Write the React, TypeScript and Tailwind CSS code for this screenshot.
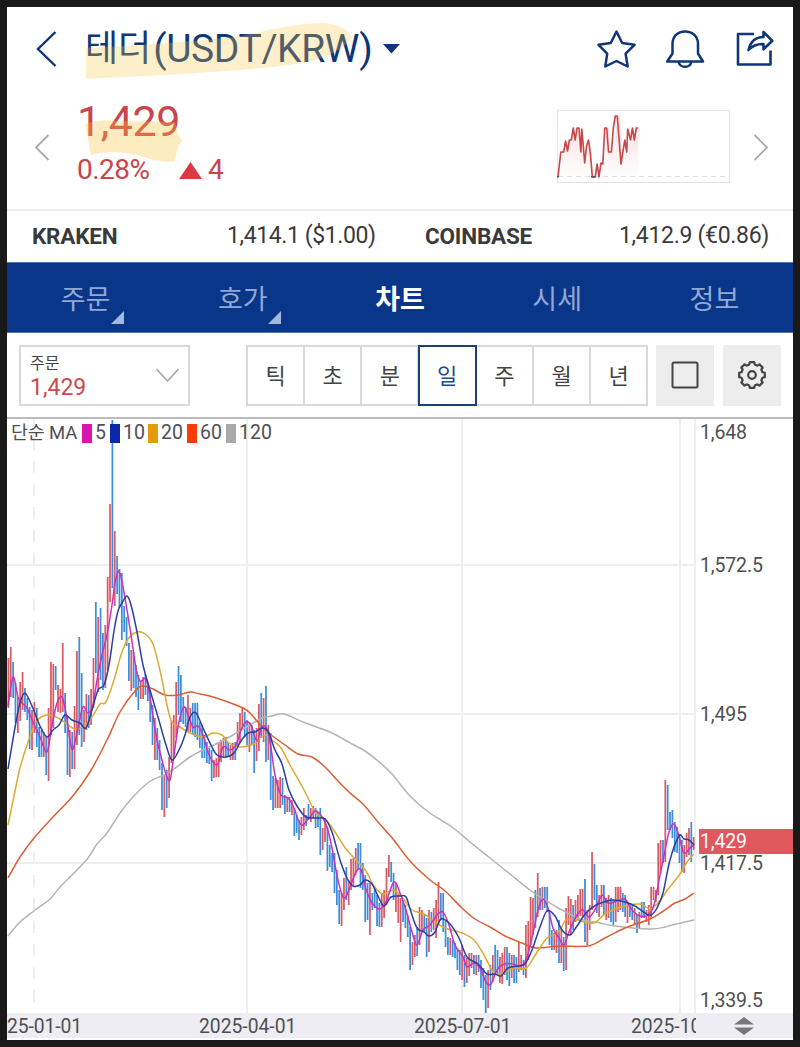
import { ReactNode } from "react";
import clsx from "clsx";

type Point = [number, number];

const CHART_LEFT = 7;
const CHART_TOP = 419;
const CANDLE_STEP = 2.363;

// one entry per day: direction, high, low
const candles =
  "u658-708 u647-697 d662-698 d683-723 u697-733 u682-721 u672-710 d688-712 d698-720 d707-749 u710-750 u702-733 d708-747 d727-757 d730-757 u732-757 d737-775 u708-781 u662-735 u664-728 " +
  "d666-690 u685-712 u689-713 u643-712 d693-733 d717-775 u730-777 d732-769 u706-769 u651-745 d637-735 d673-747 u710-742 u694-730 d695-728 u689-725 u658-708 d602-673 u617-692 d608-680 " +
  "d633-690 u625-688 u577-670 u504-602 d420-588 u531-606 d556-594 d569-608 d573-640 d606-632 d617-646 d643-681 u650-691 d652-688 d665-697 d675-710 u681-699 u677-699 d674-695 d683-701 " +
  "d690-722 d705-745 u718-760 d728-760 d740-770 d763-810 u775-817 d770-808 u757-798 u720-763 u715-757 u682-738 d666-715 d675-722 d697-724 d707-727 u695-732 u708-732 d703-735 d703-737 " +
  "d703-740 d722-748 d725-758 d735-758 d742-763 d748-764 d750-781 u760-778 u758-777 u743-777 u740-762 u738-757 d737-757 d742-757 u745-760 u743-760 d742-760 u722-747 u713-742 u707-730 " +
  "d712-737 d720-745 u722-752 d725-745 d730-773 u728-761 u704-751 d693-738 u698-742 d686-762 u725-760 d733-800 d776-810 u778-808 u780-808 u777-808 d778-805 d795-814 u797-812 d797-812 " +
  "u800-815 d808-836 d815-833 d820-840 u817-835 u808-830 d815-826 d804-820 u808-822 u806-818 d808-828 d812-827 d808-855 u828-850 u818-842 d827-871 d845-867 d853-872 d853-893 d870-905 " +
  "d890-924 u893-926 u878-910 d867-900 u880-905 u859-890 u858-885 u848-875 d843-870 d843-888 d863-890 d875-922 d883-920 u883-935 d893-910 d888-908 d895-926 d903-927 u893-927 u890-918 " +
  "u868-905 u855-877 d862-882 d873-900 u883-912 u893-923 u898-942 d900-922 d905-928 d915-937 d927-970 u942-965 u935-957 d927-956 u907-945 u910-930 d915-932 d918-957 u910-952 d912-932 " +
  "u908-930 u900-938 u882-925 d893-920 d893-932 d920-947 d937-955 u938-955 d940-957 d943-958 d948-970 d950-975 u945-980 d955-987 u958-983 u953-976 u953-968 d955-974 u955-975 d955-972 " +
  "d960-988 d968-1000 d975-1013 u970-1008 d965-990 u955-982 d945-975 d950-975 u957-983 u953-984 u947-975 d947-980 d953-986 u955-978 d955-983 d957-983 u942-972 u955-970 d960-975 u925-978 " +
  "u921-960 u897-945 u898-935 d890-928 u873-917 d888-910 u887-910 d887-908 d887-912 d912-945 d930-950 u933-950 u930-953 d920-963 u930-963 d937-971 u908-970 u896-925 u899-935 d905-930 " +
  "u900-922 u895-920 u889-916 u889-918 d879-942 u910-945 u905-930 u852-910 d864-900 d885-913 u895-917 u885-907 d885-915 u898-920 u895-918 d898-922 d900-925 u887-922 u887-912 u887-910 " +
  "d893-912 d895-917 u902-923 d903-917 d905-920 u908-925 d915-933 u912-928 d902-918 d902-918 u910-922 u905-925 u887-918 u887-900 u890-902 u843-895 u840-873 d840-863 u780-862 d785-830 " +
  "d812-830 d810-838 d822-852 d827-853 d835-863 d840-872 u845-873 u833-857 u828-855 d822-862 u837-850";

const averages = [
  {
    color: "#b4b4b4",
    points:
      "8,936 20,922 34,911 50,899 60,887 74,873 88,858 97,844 107,833 120,813 133,797 149,782 164,775 174,769 190,757 203,750 220,742 233,735 250,725 262,718 272,716 284,714 303,722 330,732 345,740 352,744 365,751 378,761 392,774 410,796 430,813 452,827 470,842 490,858 510,874 530,890 545,900 560,909 580,919 600,923 615,926 650,929 665,927 672,925 694,920",
  },
  {
    color: "#d95f35",
    points:
      "8,878 20,857 34,838 52,818 72,797 90,772 107,740 120,712 135,691 143,686 153,689 165,695 178,695 190,692 200,694 213,697 228,702 243,708 250,713 262,727 270,734 285,745 298,754 312,757 325,767 338,781 350,793 363,804 378,822 393,839 410,861 430,880 444,890 462,908 475,919 490,927 505,936 522,943 536,948 560,946 588,946 605,938 625,928 650,919 662,912 675,903 685,899 694,893",
  },
  {
    color: "#dcab32",
    points:
      "8,825 14,796 20,768 27,745 35,724 41,717 50,715 60,719 68,725 75,729 84,726 92,717 100,704 106,702 114,680 121,655 128,639 137,632 145,634 153,644 161,675 167,705 172,722 180,727 190,733 203,737 213,733 222,735 229,743 240,747 254,744 260,738 266,735 272,740 281,748 290,765 303,788 316,813 326,820 335,832 346,849 357,861 366,871 374,886 383,894 393,890 402,897 412,910 424,914 436,923 448,929 462,933 474,940 484,955 494,973 503,973 513,968 526,968 534,957 547,938 558,933 566,920 577,920 588,923 596,922 605,914 620,907 640,904 650,909 658,903 669,888 680,874 687,862 694,854",
  },
  {
    color: "#cb30c0",
    points:
      "8,706 13,677 18,697 22,703 27,708 33,722 40,737 47,752 52,725 57,703 62,697 66,713 70,740 73,749 78,728 83,707 88,713 93,705 97,680 102,655 107,635 112,605 115,583 119,571 123,587 127,610 131,635 136,668 140,681 146,679 150,697 156,735 162,760 166,774 170,780 174,755 179,722 184,707 188,715 193,727 198,726 203,735 208,752 213,762 218,764 223,747 230,750 236,745 241,730 246,722 251,725 257,741 262,727 267,729 271,748 275,775 281,795 288,798 294,808 299,822 303,825 309,818 316,811 322,817 327,827 332,848 338,880 344,898 350,887 356,872 361,870 366,889 372,903 380,909 386,902 394,882 400,893 406,910 412,932 417,945 423,930 430,925 437,915 443,912 449,925 455,945 463,957 467,967 474,963 480,968 486,982 491,984 497,970 504,964 513,964 520,966 526,960 532,938 538,910 543,899 548,908 553,928 559,938 564,945 569,932 577,915 583,910 589,917 596,908 602,895 608,903 617,901 625,899 632,910 640,916 648,915 654,905 660,875 664,856 669,832 674,824 679,836 684,853 690,848 694,845",
  },
  {
    color: "#2b3fa4",
    points:
      "8,769 12,745 16,722 20,703 25,693 32,706 40,726 47,737 53,730 59,725 65,715 72,720 80,723 86,728 92,710 98,690 104,685 109,665 114,631 118,611 122,603 127,596 131,605 137,632 143,665 150,690 158,717 166,745 172,760 179,750 185,735 190,717 196,713 203,728 211,745 217,755 226,757 234,753 241,741 248,733 255,732 262,728 268,731 275,750 282,764 289,790 297,806 306,817 316,818 325,819 332,832 340,860 347,878 353,886 360,885 365,880 372,884 378,896 384,906 391,897 400,896 406,897 411,912 417,928 424,932 429,936 435,932 441,919 450,924 459,938 467,957 478,964 487,974 495,974 501,976 508,968 518,966 525,964 532,950 540,927 547,911 555,916 562,930 570,935 577,926 586,913 596,905 604,902 613,900 625,902 635,906 645,913 651,915 657,908 663,893 670,860 679,836 684,839 689,840 694,845",
  },
];

const legend = [
  { label: "5", className: "bg-[#d916b0]", width: "w-[28px]" },
  { label: "10", className: "bg-[#0a28a8]", width: "w-[38px]" },
  { label: "20", className: "bg-[#e59a0c]", width: "w-[39px]" },
  { label: "60", className: "bg-[#fb3a06]", width: "w-[39px]" },
  { label: "120", className: "bg-[#a9a9a9]", width: "" },
];

const tabs = [
  { label: "주문", hasMenu: true },
  { label: "호가", hasMenu: true },
  { label: "차트", active: true },
  { label: "시세" },
  { label: "정보" },
];

const periods = ["틱", "초", "분", "일", "주", "월", "년"];

function smoothPath(source: string) {
  const points = source.split(" ").map((pair) => pair.split(",").map(Number) as Point);

  return points.reduce((path, point, i) => {
    if (i === 0) return `M${point[0]} ${point[1]}`;
    const before = points[i - 2] ?? points[i - 1];
    const from = points[i - 1];
    const after = points[i + 1] ?? point;
    const c1 = [from[0] + (point[0] - before[0]) / 6, from[1] + (point[1] - before[1]) / 6];
    const c2 = [point[0] - (after[0] - from[0]) / 6, point[1] - (after[1] - from[1]) / 6];
    return `${path}C${c1[0]} ${c1[1]} ${c2[0]} ${c2[1]} ${point[0]} ${point[1]}`;
  }, "");
}

function Header() {
  return (
    <header className="relative h-[83px] flex items-center justify-between pl-[29px] pr-[19px] text-[#0f3678]">
      <div className="flex items-center">
        <svg width="21" height="36" viewBox="0 0 21 36" fill="none" stroke="currentColor" strokeWidth="2.400">
          <path d="M19.500 1 2 18l17.500 17" />
        </svg>
        <h1 className="ml-[28px] w-[288px] flex items-center whitespace-nowrap text-[39px] leading-[46px] tracking-[-0.4px]">
          <span className="mr-[2px] text-[36px] tracking-[0px]">테더</span>
          <span>(USDT/KRW)</span>
        </h1>
        <svg className="ml-[10px]" width="17" height="10" viewBox="0 0 17 10" fill="currentColor">
          <path d="M0 0h17L8.500 9.500z" />
        </svg>
      </div>
      <div className="flex items-center gap-[29px]">
        <svg width="40" height="38" viewBox="0 1.500 40 38" fill="none" stroke="currentColor" strokeWidth="2.500" strokeLinejoin="round">
          <path d="m20.500 3 5.700 11.500 12.300 1.800-8.900 8.900 2.100 12.800-11.200-5.500L9.300 38l1.900-12.800-8.700-8.900 12.300-1.800z" />
        </svg>
        <svg width="40" height="38" viewBox="0 1.500 40 38" fill="none" stroke="currentColor" strokeWidth="2.500" strokeLinejoin="round">
          <path d="M7.500 25V15.500C7.500 8 12.500 3 20 3s13 5 13 12.500V25l5 8H2.200z" />
          <path d="M13.500 33.500c1 3.200 3.400 4.800 6.500 4.800s5.500-1.600 6.500-4.800" />
        </svg>
        <svg width="40" height="38" viewBox="0 1.500 40 38" fill="none" stroke="currentColor" strokeWidth="2.600" strokeLinejoin="round">
          <path d="M20 5.500H4V36H36.500V22" />
          <path d="M14.500 21.500C16.500 13 21.500 8.500 29.500 8.500V3.500l8.800 8.800-8.800 8.500v-5.300c-6-.2-11 1.500-15 6z" />
        </svg>
      </div>
      <svg
        className="absolute left-[76px] top-[14px] pointer-events-none"
        width="272"
        height="60"
        viewBox="0 0 272 60"
        fill="#f8c742"
        fillOpacity="0.28"
      >
        <path d="M3 27C60 24 120 20 158 15c25-5 50-12 80-13 14 0 27 6 31 14-6 10-20 19-47 26-65 9-145 12-219 16z" />
      </svg>
    </header>
  );
}

function Sparkline() {
  const line =
    "1,67 4,42 7,42 9,31 11,41 13,30 15,30 17,18 19,30 21,18 23,18 25,42 26,19 29,53 31,36 33,30 35,44 37,67 40,67 42,54 44,67 46,53 48,54 50,18 52,18 54,42 57,42 59,18 61,6 63,6 65,29 67,54 70,36 71,30 73,42 74,19 77,30 79,18 81,30 83,18 85,18";

  return (
    <svg width="173" height="73" viewBox="0 0 173 73" fill="none">
      <defs>
        <linearGradient id="spark" x1="0" y1="0" x2="0" y2="1">
          <stop offset="0" stopColor="#e8433f" stopOpacity="0.2" />
          <stop offset="1" stopColor="#e8433f" stopOpacity="0" />
        </linearGradient>
      </defs>
      <rect x="0.500" y="0.500" width="172" height="72" stroke="#e4e4e4" />
      <path d="M1 66.500H172" stroke="#dedede" strokeDasharray="5 4" />
      <polygon points={`${line} 81,67 1,67`.replace("85,18", "81,18")} fill="url(#spark)" />
      <polyline
        points={line}
        stroke="#c9474b"
        strokeWidth="1.700"
        strokeLinejoin="round"
        transform="scale(0.955 1)"
      />
      <path d="M34 66.800h4M0 66.800h2" stroke="#555" strokeWidth="1.500" />
    </svg>
  );
}

function PriceSummary() {
  return (
    <section className="relative h-[119px] flex justify-between pl-[27px] pr-[24px] text-[#c9444c]">
      <div className="flex">
        <svg className="mt-[44px]" width="16" height="27" viewBox="0 0 16 27" fill="none" stroke="#aaa" strokeWidth="1.800">
          <path d="M14.500 1 2 13.500l12.500 12.500" />
        </svg>
        <div className="ml-[27px]">
          <p className="mt-[7px] text-[43px] leading-[48px] tracking-[-0.400px]">1,429</p>
          <div className="mt-[9px] flex items-center text-[28px] leading-[32px] tracking-[-0.5px]">
            <span className="w-[102px]">0.28%</span>
            <svg width="23" height="17" viewBox="0 0 23 17" fill="#dc3940">
              <path d="M11.500 0 23 17H0z" />
            </svg>
            <span className="ml-[6px]">4</span>
          </div>
        </div>
      </div>
      <div className="flex">
        <div className="mt-[20px]">
          <Sparkline />
        </div>
        <svg className="ml-[23px] mt-[44px]" width="16" height="27" viewBox="0 0 16 27" fill="none" stroke="#aaa" strokeWidth="1.800">
          <path d="m1.500 1 12.500 12.500L1.500 26" />
        </svg>
      </div>
      <svg
        className="absolute left-[77px] top-[27px] pointer-events-none"
        width="100"
        height="46"
        viewBox="0 0 100 46"
        fill="#f8c03c"
        fillOpacity="0.32"
      >
        <path d="M1 7c10-4 20-4 32-3l58 1 3 13 4 6-4 5-3 15c-5 2-14 0-22-1-20-8-45-10-62-5z" />
      </svg>
    </section>
  );
}

function Exchanges() {
  return (
    <section className="h-[53px] shrink-0 flex items-center border-t-2 border-[#eeeeee] pl-[25px] pr-[24px] text-[23px] leading-[30px] text-[#3a3a3a] tracking-[-0.400px]">
      <b className="w-[195px] pb-[2px] font-bold text-[22.500px] tracking-[-0.200px]">KRAKEN</b>
      <span className="w-[198px] pb-px">1,414.1 ($1.00)</span>
      <b className="pb-[2px] font-bold text-[22.500px] tracking-[-0.200px]">COINBASE</b>
      <span className="ml-auto pb-px tracking-[-0.300px]">1,412.9 (€0.86)</span>
    </section>
  );
}

function Tabs() {
  return (
    <nav className="h-[71px] grid grid-cols-5 bg-[#093688] border-y border-[#4f74b3]">
      {tabs.map((tab) => (
        <div
          key={tab.label}
          className={clsx(
            "relative flex items-center justify-center pt-[5px] text-[27px] leading-[40px]",
            tab.active ? "font-bold text-white" : "text-[#91a8d4]"
          )}
        >
          <span>{tab.label}</span>
          {tab.hasMenu && (
            <svg className="absolute right-[40px] bottom-[8px]" width="13" height="13" viewBox="0 0 13 13" fill="#a4b8de">
              <path d="M13 0v13H0z" />
            </svg>
          )}
        </div>
      ))}
    </nav>
  );
}

function IconButton({ children, className }: { children: ReactNode; className?: string }) {
  return (
    <button className={clsx("h-[61px] w-[58px] flex items-center justify-center bg-[#ededed] pb-px text-[#444]", className)}>
      {children}
    </button>
  );
}

function gearPath() {
  let d = "";
  for (let i = 0; i < 8; i++) {
    [
      [-15, 10.800],
      [-10, 13],
      [10, 13],
      [15, 10.800],
    ].forEach(([offset, radius]) => {
      const angle = ((i * 45 + offset) * Math.PI) / 180;
      d += `${d ? "L" : "M"}${14 + radius * Math.sin(angle)} ${14 - radius * Math.cos(angle)}`;
    });
  }
  return `${d}Z`;
}

function Toolbar() {
  return (
    <section className="h-[84px] flex items-start pt-[12px] pl-[12px]">
      <button className="h-[61px] w-[171px] flex items-center justify-between border-2 border-[#d7d9db] pl-[9px] pr-[9px] text-left">
        <span className="pt-[4px]">
          <span className="block text-[16px] leading-[20px] text-[#444]">주문</span>
          <span className="block text-[23px] leading-[27px] text-[#cb4a50]">1,429</span>
        </span>
        <svg width="24" height="15" viewBox="0 0 24 15" fill="none" stroke="#aaa" strokeWidth="1.800">
          <path d="m1.500 1 11 12L23.500 1" />
        </svg>
      </button>
      <div className="ml-[56px] flex">
        {periods.map((period) => (
          <button
            key={period}
            className={clsx(
              "h-[61px] w-[59px] flex items-center justify-center border-2 pt-[2px] text-[22px]",
              period === "일" ? "relative border-[#1b3f78] text-[#1e4b94]" : "border-[#d7d9db] text-[#444]",
              period !== "틱" && "-ml-[1.800px]"
            )}
          >
            {period}
          </button>
        ))}
      </div>
      <IconButton className="ml-[8px]">
        <svg width="28" height="28" viewBox="0 0 28 28" fill="none" stroke="currentColor" strokeWidth="2">
          <rect x="1.500" y="1.500" width="25" height="25" rx="1.500" />
        </svg>
      </IconButton>
      <IconButton className="ml-[9px]">
        <svg width="28" height="28" viewBox="0 0 28 28" fill="none" stroke="currentColor" strokeWidth="2.200" strokeLinejoin="round">
          <path d={gearPath()} />
          <circle cx="14" cy="14" r="3.800" />
        </svg>
      </IconButton>
    </section>
  );
}

function Chart() {
  return (
    <svg width="690" height="594" viewBox={`${CHART_LEFT} ${CHART_TOP} 690 594`} fill="none">
      <g stroke="#eceef1" strokeWidth="2">
        <path d="M7 565H695M7 714H695M7 863H695" />
        <path d="M247 419V1013M462 419V1013M680 419V1013M695 419V1013" />
        <path d="M34 419V1013" strokeDasharray="12 11" strokeDashoffset="4" />
      </g>
      <g strokeWidth="1.750">
        {candles.split(" ").map((candle, i) => {
          const [high, low] = candle.slice(1).split("-");
          const x = 8.400 + i * CANDLE_STEP;
          return <path key={i} d={`M${x} ${high}V${low}`} stroke={candle[0] === "u" ? "#d95a64" : "#3a8edc"} />;
        })}
      </g>
      <g strokeWidth="1.500" strokeLinejoin="round">
        {averages.map((average) => (
          <path key={average.color} d={smoothPath(average.points)} stroke={average.color} />
        ))}
      </g>
    </svg>
  );
}

function Legend() {
  return (
    <div className="absolute left-[4px] top-[4px] h-[20px] flex items-center whitespace-nowrap text-[19.500px] leading-[20px]">
      <span className="w-[71px] text-[18.500px] tracking-[-0.2px]">단순 MA</span>
      {legend.map((item) => (
        <span key={item.label} className={clsx("flex items-center", item.width)}>
          <i className={clsx("mr-[3px] h-[19px] w-[10px] shrink-0", item.className)} />
          {item.label}
        </span>
      ))}
    </div>
  );
}

function PriceAxis() {
  return (
    <div className="flex-1 flex flex-col text-[19.500px] leading-[26px] tracking-[-0.150px]">
      <span className="mt-[1px] pl-[3px]">1,648</span>
      <span className="mt-[107px] pl-[3px]">1,572.5</span>
      <span className="mt-[123px] pl-[3px]">1,495</span>
      <span className="mt-[101px] ml-[2px] h-[25px] bg-[#e1575e] pl-[1px] text-white">1,429</span>
      <span className="mt-[-3px] pl-[3px]">1,417.5</span>
      <span className="mt-[111px] pl-[3px]">1,339.5</span>
    </div>
  );
}

function DateAxis() {
  return (
    <div className="relative h-[25px] flex overflow-hidden whitespace-nowrap bg-[#ededf3] text-[19.300px] leading-[27px]">
      <span className="w-[192px] tracking-[-0.100px]">25-01-01</span>
      <span className="w-[215px]">2025-04-01</span>
      <span className="w-[217px]">2025-07-01</span>
      <span className="w-[65px] overflow-hidden">2025-10-01</span>
      <svg className="ml-[38px] mt-[4px]" width="20" height="18" viewBox="0 0 20 18" fill="#777">
        <path d="M0 7.500 10 0l10 7.500zM0 10.500h20L10 18z" />
      </svg>
    </div>
  );
}

export default function App() {
  return (
    <div className="h-[1047px] w-[800px] bg-[#191919] p-[7px] font-['Roboto','Noto_Sans_CJK_KR',sans-serif]">
      <main className="h-[1033px] w-[786px] flex flex-col bg-white overflow-hidden">
        <Header />
        <PriceSummary />
        <Exchanges />
        <Tabs />
        <Toolbar />
        <section className="relative border-t-2 border-[#bcbcbc] text-[#4f4f52]">
          <div className="h-[594px] flex">
            <Chart />
            <PriceAxis />
          </div>
          <Legend />
          <DateAxis />
        </section>
      </main>
    </div>
  );
}
